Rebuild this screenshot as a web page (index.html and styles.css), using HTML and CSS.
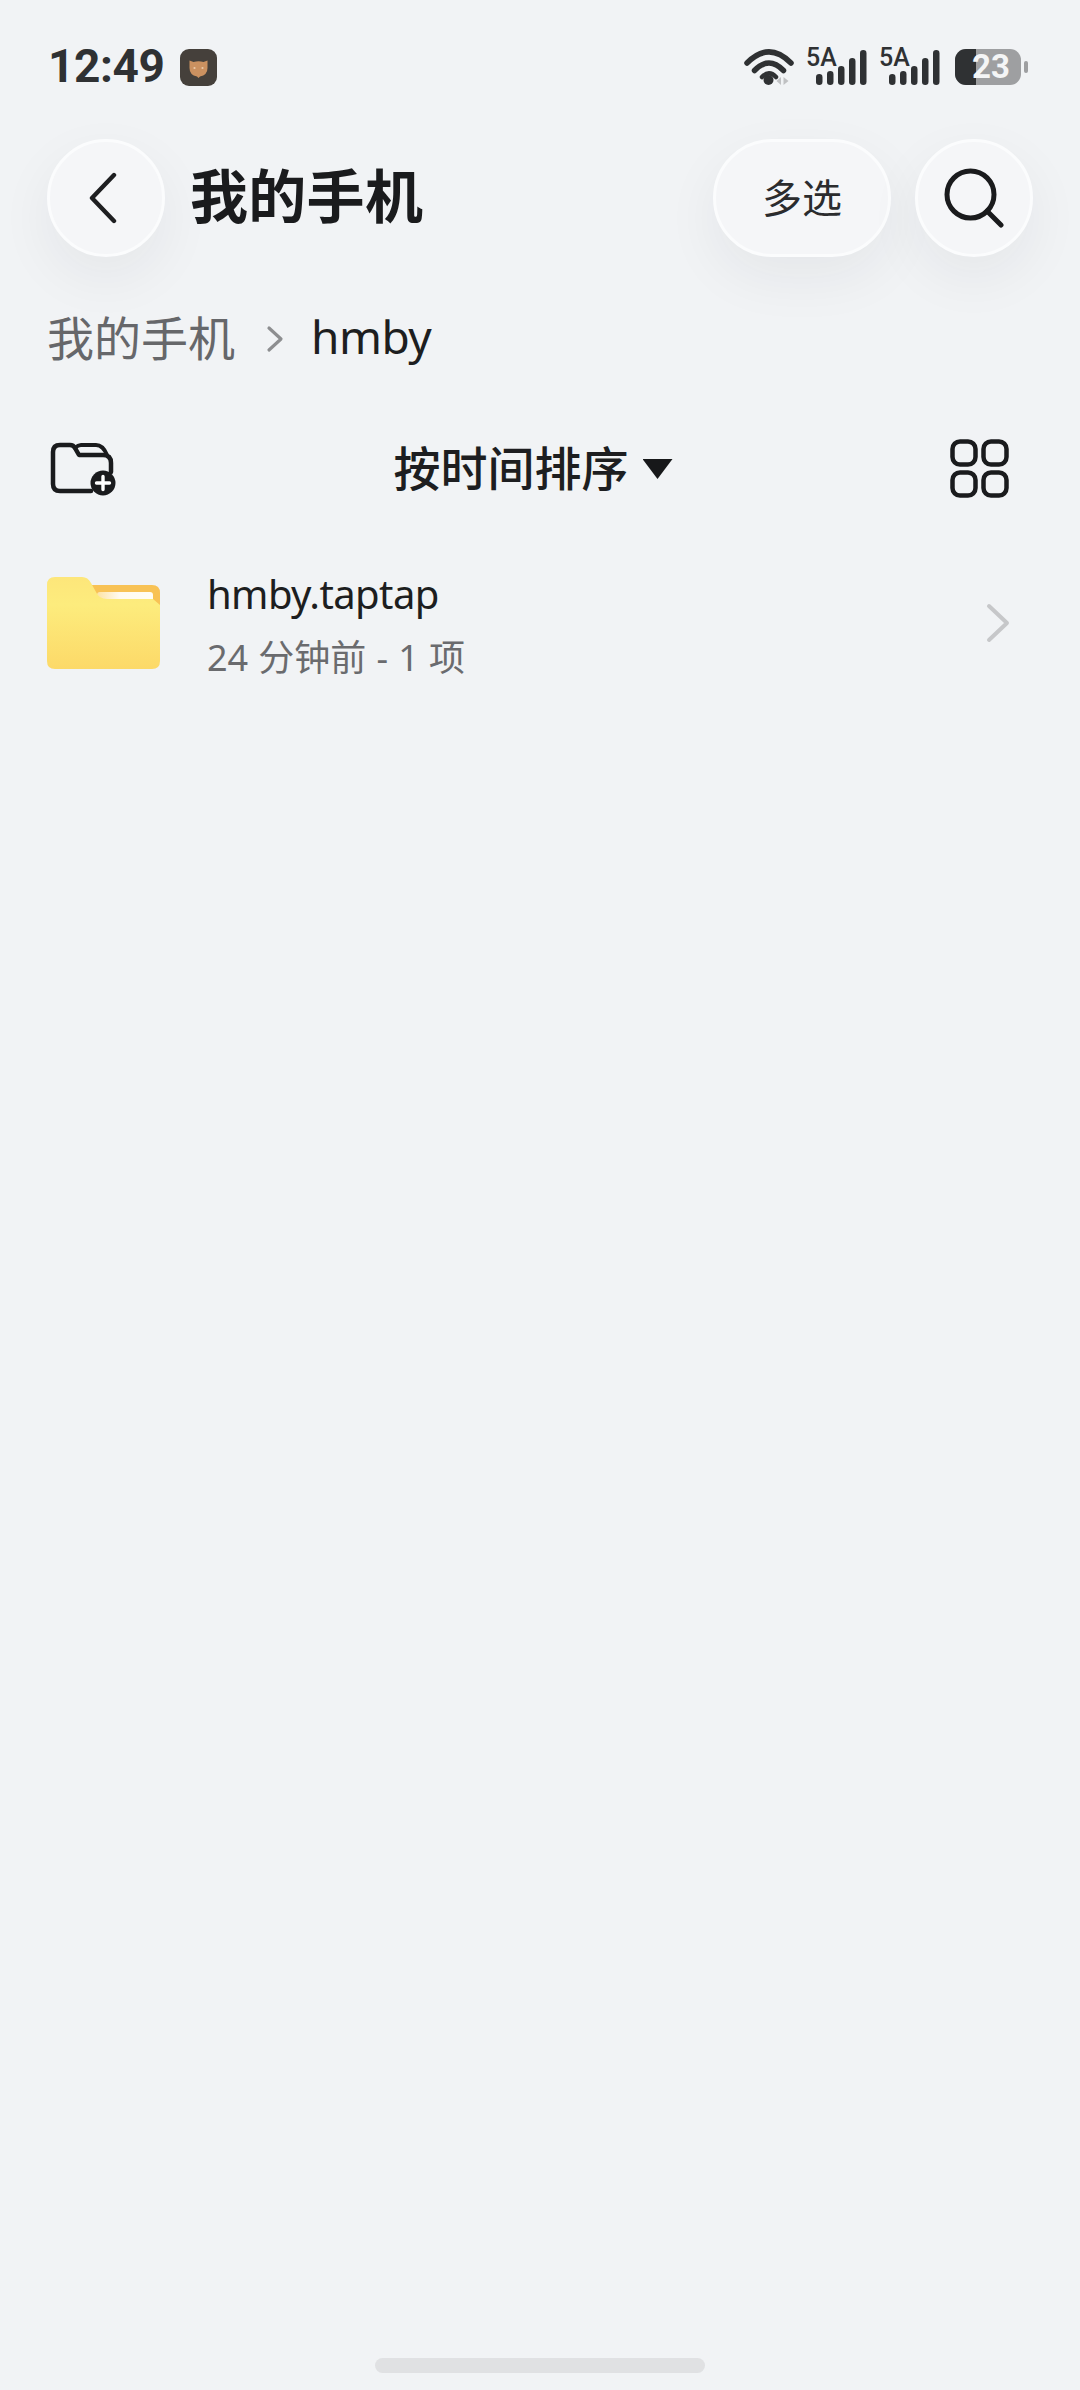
FILE: index.html
```html
<!DOCTYPE html>
<html lang="zh-CN">
<head>
<meta charset="utf-8">
<title>我的手机</title>
<link rel="stylesheet" href="styles.css">
</head>
<body>
<div class="page">
  <div class="status">
    <div class="status-left">
      <span class="time">12:49</span>
      <svg class="app-icon" viewBox="0 0 37 37">
        <rect width="37" height="37" rx="9" fill="#45403b"/>
        <path d="M9.5 11.5 L13.5 13 Q18.5 11.5 23.5 13 L27.5 11.5 L27.5 19 Q27.5 26 20 27.5 L18.5 29 L17 27.5 Q9.5 26 9.5 19 Z" fill="#cb9160"/>
        <circle cx="14.5" cy="19" r="1.1" fill="#eccba8"/>
        <circle cx="22.5" cy="19" r="1.1" fill="#eccba8"/>
      </svg>
    </div>
    <div class="status-right">
      <svg class="wifi" viewBox="0 0 50 37">
        <path d="M3 14 Q25 -8 47 14" fill="none" stroke="#2f3133" stroke-width="5.5" stroke-linecap="round"/>
        <path d="M10.500 21.500 Q25 6.500 39.500 21.500" fill="none" stroke="#2f3133" stroke-width="5.500" stroke-linecap="round"/>
        <path d="M18 28 Q25 20.500 32 28" fill="none" stroke="#2f3133" stroke-width="4.500" stroke-linecap="round"/>
        <circle cx="24.500" cy="31" r="5" fill="#2f3133"/>
        <path d="M37 28 V36 L32.500 32 Z M39.500 28 V36 L44.500 32 Z" fill="#c0c1c3"/>
      </svg>
      <div class="signal">
        <span class="signal-label">5A</span>
        <svg class="signal-bars" viewBox="0 0 51 35">
          <rect x="0" y="24" width="6.5" height="11" rx="3.2" fill="#2f3133"/>
          <rect x="11" y="21" width="6.5" height="14" rx="3.2" fill="#2f3133"/>
          <rect x="22" y="16" width="6.5" height="19" rx="3.2" fill="#2f3133"/>
          <rect x="33" y="8" width="6.5" height="27" rx="3.2" fill="#2f3133"/>
          <rect x="44" y="0" width="6.5" height="35" rx="3.2" fill="#2f3133"/>
        </svg>
      </div>
      <div class="signal signal-last">
        <span class="signal-label">5A</span>
        <svg class="signal-bars" viewBox="0 0 51 35">
          <rect x="0" y="24" width="6.5" height="11" rx="3.2" fill="#2f3133"/>
          <rect x="11" y="21" width="6.5" height="14" rx="3.2" fill="#2f3133"/>
          <rect x="22" y="16" width="6.5" height="19" rx="3.2" fill="#2f3133"/>
          <rect x="33" y="8" width="6.5" height="27" rx="3.2" fill="#2f3133"/>
          <rect x="44" y="0" width="6.5" height="35" rx="3.2" fill="#2f3133"/>
        </svg>
      </div>
      <div class="battery">
        <div class="battery-body">
          <div class="battery-fill"></div>
          <span class="battery-text">23</span>
        </div>
        <div class="battery-nub"></div>
      </div>
    </div>
  </div>

  <header class="header">
    <div class="header-left">
      <button class="round-btn">
        <svg class="back-icon" viewBox="0 0 28 52">
          <path d="M25 3 L3 26 L25 49" fill="none" stroke="#1e1f21" stroke-width="4.4" stroke-linecap="round" stroke-linejoin="round"/>
        </svg>
      </button>
      <h1 class="title">我的手机</h1>
    </div>
    <div class="header-right">
      <button class="round-btn pill">多选</button>
      <button class="round-btn">
        <svg class="search-icon" viewBox="0 0 60 60">
          <circle cx="26.5" cy="26.5" r="23.5" fill="none" stroke="#1a1b1d" stroke-width="5"/>
          <path d="M43 43 L57 57" fill="none" stroke="#1a1b1d" stroke-width="5" stroke-linecap="round"/>
        </svg>
      </button>
    </div>
  </header>

  <nav class="crumbs">
    <span class="crumb-root">我的手机</span>
    <svg class="crumb-sep" viewBox="0 0 18 28">
      <path d="M3 3 L15 14 L3 25" fill="none" stroke="#8d8e90" stroke-width="3.2" stroke-linecap="round" stroke-linejoin="round"/>
    </svg>
    <span class="crumb-current">hmby</span>
  </nav>

  <div class="toolbar">
    <svg class="new-folder" viewBox="0 0 66 54">
      <path d="M41 49 H10 Q3 49 3 42 V10 Q3 3 10 3 H20 Q23.500 3 25 6 L29 13 H53 Q61 13 61 21 V30" fill="none" stroke="#1a1b1d" stroke-width="4.500" stroke-linecap="round" stroke-linejoin="round"/>
      <path d="M25 6 Q28 3 31 3 H46 Q53 3 57 13" fill="none" stroke="#1a1b1d" stroke-width="4" stroke-linecap="round"/>
      <circle cx="53" cy="41" r="12.500" fill="#1a1b1d"/>
      <path d="M53 34.500 V47.500 M46.500 41 H59.500" stroke="#fff" stroke-width="3.400" stroke-linecap="round"/>
    </svg>
    <div class="sort">
      <span class="sort-label">按时间排序</span>
      <span class="sort-arrow"></span>
    </div>
    <svg class="grid-icon" viewBox="0 0 60 60">
      <rect x="2.500" y="2.500" width="23" height="23" rx="7.500" fill="none" stroke="#1a1b1d" stroke-width="4.500"/>
      <rect x="33.500" y="2.500" width="23" height="23" rx="7.500" fill="none" stroke="#1a1b1d" stroke-width="4.500"/>
      <rect x="2.500" y="33.500" width="23" height="23" rx="7.500" fill="none" stroke="#1a1b1d" stroke-width="4.500"/>
      <rect x="33.500" y="33.500" width="23" height="23" rx="7.500" fill="none" stroke="#1a1b1d" stroke-width="4.500"/>
    </svg>
  </div>

  <div class="file-row">
    <svg class="folder-icon" viewBox="0 0 113 92">
      <defs>
        <linearGradient id="front" x1="0" y1="0" x2="0" y2="1">
          <stop offset="0" stop-color="#fde67a"/>
          <stop offset="0.3" stop-color="#fdec7d"/>
          <stop offset="1" stop-color="#fcd968"/>
        </linearGradient>
        <linearGradient id="sheet" x1="0" y1="0" x2="1" y2="0">
          <stop offset="0" stop-color="#fde3a5"/>
          <stop offset="0.4" stop-color="#fffaf0"/>
          <stop offset="1" stop-color="#fffdf5"/>
        </linearGradient>
      </defs>
      <path d="M40 8 H105 Q113 8 113 16 V40 H40 Z" fill="#f8c255"/>
      <rect x="50" y="15" width="56" height="20" rx="3" fill="url(#sheet)"/>
      <path d="M0 8 Q0 0 8 0 H35 Q41 0 44 6 L49 15 Q52 22 60 22 H106 L113 28 V84 Q113 92 105 92 H8 Q0 92 0 84 Z" fill="url(#front)"/>
    </svg>
    <div class="file-text">
      <div class="file-name">hmby.taptap</div>
      <div class="file-meta">24 分钟前 - 1 项</div>
    </div>
    <svg class="row-chevron" viewBox="0 0 24 40">
      <path d="M3 3 L21 20 L3 37" fill="none" stroke="#c6c7c9" stroke-width="4" stroke-linecap="round" stroke-linejoin="round"/>
    </svg>
  </div>

  <div class="home-bar"></div>
</div>
</body>
</html>
```
FILE: styles.css
```css
* { box-sizing: border-box; }
html, body { margin: 0; padding: 0; }
body {
  background: #f1f3f5;
  font-family: Roboto, "Noto Sans CJK SC", sans-serif;
  color: #1a1b1d;
}
.page {
  width: 1080px;
  height: 2390px;
  overflow: hidden;
  display: flex;
  flex-direction: column;
}
.status {
  display: flex;
  justify-content: space-between;
  align-items: center;
  height: 38px;
  margin-top: 47px;
  padding: 0 52px 0 48px;
}
.status-left { display: flex; align-items: center; gap: 15px; }
.time {
  font-size: 46px;
  font-weight: 700;
  line-height: 38px;
  color: #2f3133;
  letter-spacing: -0.4px;
  font-family: Roboto, sans-serif;
}
.app-icon { width: 37px; height: 37px; display: block; margin-top: 2px; }
.status-right { display: flex; align-items: flex-start; margin-top: 2px; }
.wifi { width: 50px; height: 37px; display: block; margin-left: 1px; margin-right: 12px; }
.signal {
  position: relative;
  width: 60px;
  height: 36px;
  margin-right: 13px;
}
.signal-last { margin-right: 16px; }
.signal-label {
  position: absolute;
  left: 0;
  top: -3px;
  font-size: 25px;
  line-height: 24px;
  font-weight: 500;
  color: #2f3133;
  font-family: Roboto, sans-serif;
}
.signal-bars {
  position: absolute;
  left: 10px;
  top: 1px;
  width: 51px;
  height: 35px;
  display: block;
}
.battery { display: flex; align-items: center; gap: 3px; }
.battery-body {
  position: relative;
  width: 66px;
  height: 36px;
  border-radius: 11px;
  background: #9e9fa1;
}
.battery-fill { width: 21px; height: 100%; background: #2f3133; border-radius: 11px 0 0 11px; }
.battery-text {
  position: absolute;
  left: 17px;
  top: 0;
  font-size: 33px;
  line-height: 36px;
  font-weight: 700;
  color: #f4f5f6;
  font-family: Roboto, sans-serif;
}
.battery-nub { width: 4px; height: 12px; border-radius: 2px; background: #9e9fa1; }

.header {
  display: flex;
  justify-content: space-between;
  align-items: center;
  margin-top: 54px;
  padding: 0 47px;
}
.header-left, .header-right { display: flex; align-items: center; }
.header-left { gap: 25px; }
.header-right { gap: 24px; }
.round-btn {
  width: 118px;
  height: 118px;
  padding: 0;
  border-radius: 59px;
  border: 3px solid #fbfcfd;
  background: #f5f6f8;
  box-shadow: 0 20px 56px rgba(30, 35, 45, 0.06);
  display: flex;
  align-items: center;
  justify-content: center;
  font-family: "Noto Sans CJK SC", sans-serif;
  font-size: 40px;
  color: #2b2c2e;
}
.pill { width: 178px; padding-bottom: 5px; }
.back-icon { width: 28px; height: 52px; display: block; margin-right: 6px; }
.search-icon { width: 60px; height: 60px; display: block; }
.title {
  margin: 0 0 10px;
  font-family: "Noto Sans CJK SC", sans-serif;
  font-size: 58px;
  line-height: 70px;
  font-weight: 700;
  letter-spacing: 0.3px;
  color: #1a1b1d;
}
.crumbs {
  display: flex;
  align-items: center;
  height: 60px;
  margin-top: 52px;
  padding-left: 47px;
}
.crumb-root {
  margin-bottom: 8px;
  font-family: "Noto Sans CJK SC", sans-serif;
  font-size: 47px;
  color: #66676a;
}
.crumb-sep { width: 18px; height: 28px; margin: 0 27px 0 31px; display: block; }
.crumb-current {
  margin-bottom: 6px;
  font-family: "Noto Sans", sans-serif;
  font-size: 46px;
  color: #1d1e20;
  letter-spacing: -0.5px;
}
.toolbar {
  display: flex;
  justify-content: space-between;
  align-items: center;
  height: 60px;
  margin-top: 70px;
  padding: 0 70px 0 50px;
}
.new-folder { width: 66px; height: 54px; display: block; }
.grid-icon { width: 60px; height: 60px; display: block; }
.sort { display: flex; align-items: center; gap: 14px; }
.sort-label {
  margin-bottom: 8px;
  font-family: "Noto Sans CJK SC", sans-serif;
  font-size: 47px;
  font-weight: 500;
  color: #1d1e20;
}
.sort-arrow {
  width: 30px;
  height: 20px;
  background: #17181a;
  clip-path: polygon(0 0, 100% 0, 50% 100%);
}
.file-row {
  display: flex;
  align-items: center;
  height: 100px;
  margin-top: 74px;
  padding: 0 70px 0 47px;
}
.folder-icon { width: 113px; height: 92px; display: block; }
.file-text { margin-left: 47px; flex: 1; padding-top: 4px; }
.file-name {
  font-family: "Noto Sans", sans-serif;
  font-size: 40px;
  line-height: 50px;
  letter-spacing: -0.6px;
  color: #1d1e20;
}
.file-meta {
  margin-top: 16px;
  font-family: "Noto Sans", "Noto Sans CJK SC", sans-serif;
  font-size: 36px;
  line-height: 46px;
  word-spacing: 0.8px;
  color: #6a6b6e;
}
.row-chevron { width: 24px; height: 40px; display: block; }
.home-bar {
  width: 330px;
  height: 15px;
  margin: auto auto 17px;
  border-radius: 8px;
  background: #e0e1e3;
}
```
